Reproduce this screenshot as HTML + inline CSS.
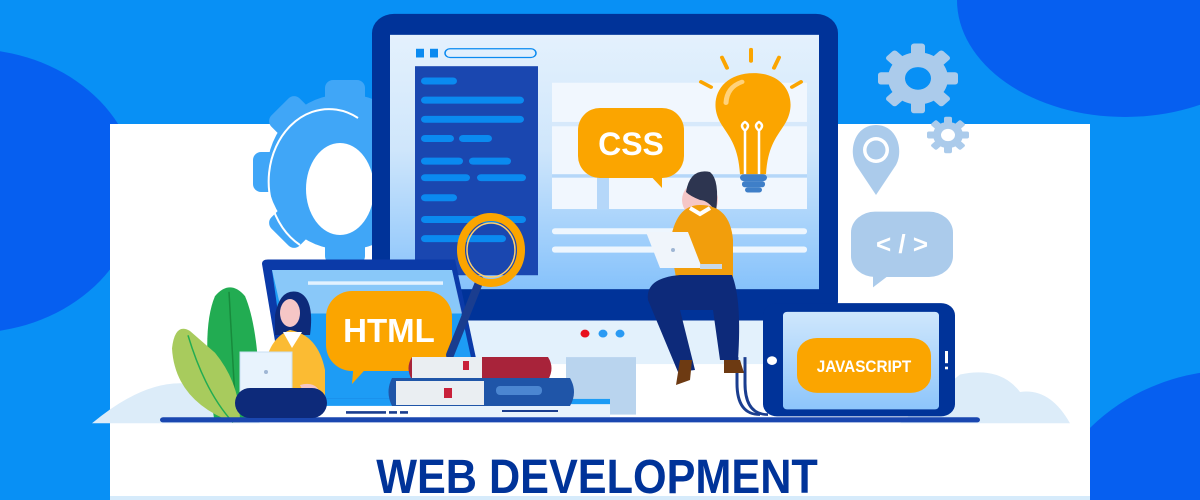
<!DOCTYPE html>
<html><head><meta charset="utf-8"><style>
html,body{margin:0;padding:0;width:1200px;height:500px;overflow:hidden;background:#0890f5}
svg{display:block}
</style></head><body>
<svg width="1200" height="500" viewBox="0 0 1200 500" xmlns="http://www.w3.org/2000/svg" font-family="Liberation Sans, sans-serif">
<defs>
<linearGradient id="sg" x1="0" y1="0" x2="0" y2="1"><stop offset="0" stop-color="#e4f1fd"/><stop offset="0.45" stop-color="#cfe6fb"/><stop offset="1" stop-color="#86c2fb"/></linearGradient>
<linearGradient id="tg" x1="0" y1="0" x2="0" y2="1"><stop offset="0" stop-color="#cfe7fc"/><stop offset="1" stop-color="#8dc5fb"/></linearGradient>
</defs>
<rect width="1200" height="500" fill="#0890f5"/>
<ellipse cx="-30" cy="191" rx="168" ry="142" fill="#065ff0"/>
<ellipse cx="1125" cy="0" rx="168" ry="117" fill="#065ff0"/>
<ellipse cx="1235" cy="545" rx="195" ry="175" fill="#065ff0"/>
<rect x="110" y="124" width="980" height="376" fill="#fff"/>
<rect x="110" y="496" width="980" height="4" fill="#d6ebfb"/>
<g fill="#40a6f7" transform="translate(345 172)">
<circle r="78"/>
<rect x="-20" y="-92" width="40" height="184" rx="8"/>
<rect x="-20" y="-92" width="40" height="184" rx="8" transform="rotate(45)"/>
<rect x="-20" y="-92" width="40" height="184" rx="8" transform="rotate(90)"/>
<rect x="-20" y="-92" width="40" height="184" rx="8" transform="rotate(135)"/>
</g>
<ellipse cx="340" cy="189" rx="34" ry="46" fill="#fff"/>
<path d="M358 118 A60 72 0 0 0 300 245" stroke="#fff" stroke-width="2" fill="none"/>
<g transform="scale(1 0.871)">
<path d="M92 486 Q140 440 180 440 Q230 440 260 486Z" fill="#dcecf9"/>
<path d="M960 430 Q1000 420 1020 450 Q1050 445 1070 486 L900 486Z" fill="#dcecf9"/>
<rect x="372" y="16" width="466" height="352" rx="22" fill="#003399"/>
<rect x="390" y="40" width="429" height="292" fill="url(#sg)"/>
<rect x="416" y="56" width="8" height="10" fill="#0a8af0"/><rect x="430" y="56" width="8" height="10" fill="#0a8af0"/>
<rect x="445" y="56" width="91" height="10" rx="5" fill="none" stroke="#0a8af0" stroke-width="1.5"/>
<rect x="552" y="95" width="255" height="145" fill="#f1f7fe"/>
<rect x="552" y="140" width="255" height="5" fill="#d7e9fb"/>
<rect x="552" y="200" width="255" height="4" fill="#b5d7f9"/>
<rect x="597" y="200" width="12" height="40" fill="#b5d7f9"/>
<rect x="552" y="262" width="255" height="7" rx="3" fill="#eef6fe"/>
<rect x="552" y="283" width="255" height="7" rx="3" fill="#eef6fe"/>
<rect x="415" y="76" width="123" height="240" fill="#1a47b0"/>
<g fill="#0a8af0">
<rect x="421" y="89" width="36" height="8" rx="4"/>
<rect x="421" y="111" width="103" height="8" rx="4"/>
<rect x="421" y="133" width="103" height="8" rx="4"/>
<rect x="421" y="155" width="33" height="8" rx="4"/><rect x="459" y="155" width="33" height="8" rx="4"/>
<rect x="421" y="181" width="42" height="8" rx="4"/><rect x="469" y="181" width="42" height="8" rx="4"/>
<rect x="421" y="200" width="49" height="8" rx="4"/><rect x="477" y="200" width="49" height="8" rx="4"/>
<rect x="421" y="223" width="36" height="8" rx="4"/>
<rect x="421" y="248" width="105" height="8" rx="4"/>
<rect x="421" y="270" width="85" height="8" rx="4"/>
</g>
<rect x="440" y="368" width="330" height="50" fill="#e3f1fc"/>
<rect x="566" y="410" width="70" height="66" fill="#b9d4ee"/>
<circle cx="585" cy="383" r="4.5" fill="#e8101e"/><circle cx="603" cy="383" r="4.5" fill="#2a9af3"/><circle cx="620" cy="383" r="4.5" fill="#2a9af3"/>
<g stroke="#fba500" stroke-width="4" stroke-linecap="round">
<line x1="751" y1="57" x2="751" y2="70"/><line x1="722" y1="66" x2="727" y2="78"/><line x1="779" y1="66" x2="774" y2="78"/>
<line x1="701" y1="94" x2="711" y2="100"/><line x1="801" y1="94" x2="792" y2="100"/></g>
<path d="M754 84 C720 84 708 115 720 140 C728 156 738 165 740 200 L766 200 C768 165 778 156 786 140 C798 115 786 84 754 84Z" fill="#fba500"/>
<path d="M726 118 Q727 100 742 94" stroke="#ffd27a" stroke-width="5" fill="none" stroke-linecap="round"/>
<path d="M745 200 V150 M759 200 V150 M745 150 q-6 -6 0 -10 q6 4 0 10 M759 150 q-6-6 0-10 q6 4 0 10" stroke="#fff" stroke-width="2.5" fill="none"/>
<rect x="740" y="200" width="27" height="8" rx="4" fill="#3f7fc8"/>
<rect x="742" y="208" width="23" height="7" rx="3" fill="#3f7fc8"/>
<rect x="745" y="215" width="17" height="6" rx="3" fill="#3f7fc8"/>
<path d="M737 410 V440 Q737 476 760 476" stroke="#1a3d8f" stroke-width="3" fill="none"/>
<path d="M745 410 V440 Q745 476 768 476" stroke="#1a3d8f" stroke-width="3" fill="none"/>
<rect x="763" y="348" width="192" height="130" rx="14" fill="#003399"/>
<rect x="783" y="358" width="156" height="112" rx="4" fill="url(#tg)"/>
<circle cx="772" cy="414" r="5" fill="#fff"/>
<rect x="797" y="388" width="134" height="63" rx="20" fill="#fba500"/>
<rect x="945" y="403" width="3" height="14" fill="#fff"/><rect x="945" y="421" width="3" height="3" fill="#fff"/>
<path d="M262 303 Q262 298 268 298 L455 298 L485 460 L285 460Z" fill="#0b3aa8"/>
<path d="M272 310 L452 310 L480 458 L290 458Z" fill="#1d9cf5"/>
<path d="M272 310 L452 310 L462 360 L282 360Z" fill="#b8dcfb" opacity="0.7"/>
<rect x="308" y="323" width="135" height="4" fill="#e3f2ff"/>
<rect x="290" y="458" width="320" height="8" fill="#1d9cf5"/>
<rect x="430" y="464" width="180" height="15" fill="#e8f3fc"/>
<rect x="346" y="472" width="40" height="3" fill="#1a3d8f"/><rect x="389" y="472" width="8" height="3" fill="#1a3d8f"/><rect x="400" y="472" width="8" height="3" fill="#1a3d8f"/>
<path d="M214 480 Q200 380 215 340 Q230 320 245 340 Q260 380 260 480Z" fill="#22ac52"/>
<path d="M229 335 L236 480" stroke="#188a3c" stroke-width="1.5"/>
<path d="M233 485 Q175 460 172 400 Q175 370 190 380 Q200 390 215 405 Q240 440 240 485Z" fill="#a8cb5d"/>
<path d="M188 385 Q205 450 233 485" stroke="#22ac52" stroke-width="1.5" fill="none"/>
<rect x="160" y="479" width="820" height="6" rx="3" fill="#1a47b0"/>
<g fill="#abcbeb">
<circle cx="918" cy="90" r="30"/>
<g transform="translate(918 90)">
<rect x="-7" y="-40" width="14" height="80" rx="3"/>
<rect x="-7" y="-40" width="14" height="80" rx="3" transform="rotate(45)"/>
<rect x="-7" y="-40" width="14" height="80" rx="3" transform="rotate(90)"/>
<rect x="-7" y="-40" width="14" height="80" rx="3" transform="rotate(135)"/>
</g>
<circle cx="948" cy="155" r="15"/>
<g transform="translate(948 155)">
<rect x="-4" y="-21" width="8" height="42" rx="2"/>
<rect x="-4" y="-21" width="8" height="42" rx="2" transform="rotate(45)"/>
<rect x="-4" y="-21" width="8" height="42" rx="2" transform="rotate(90)"/>
<rect x="-4" y="-21" width="8" height="42" rx="2" transform="rotate(135)"/>
</g>
<rect x="851" y="243" width="102" height="75" rx="24"/>
<path d="M873 310 L890 315 L873 330Z"/>
</g>
<circle cx="918" cy="90" r="13" fill="#0890f5"/>
<circle cx="948" cy="155" r="7" fill="#fff"/>
</g>
<!-- unscaled elements -->
<path d="M876 125 C855 125 848 150 856 165 L876 195 L896 165 C904 150 897 125 876 125Z" fill="#abcbeb"/>
<circle cx="876" cy="150" r="13" fill="#fff"/><circle cx="876" cy="150" r="9.5" fill="#abcbeb"/>
<!-- CSS bubble -->
<rect x="578" y="108" width="106" height="70" rx="22" fill="#fba500"/>
<path d="M645 170 L662 170 L662 188Z" fill="#fba500"/>
<!-- man -->
<circle cx="700" cy="200" r="18" fill="#f5c6c6"/>
<path d="M686 192 Q690 168 710 172 Q720 180 716 212 Q708 200 700 200 Q690 196 686 192Z" fill="#2d3550"/>
<path d="M670 244 Q675 205 700 205 Q730 205 733 240 L733 300 L680 300Z" fill="#f29e0c"/>
<path d="M690 208 L700 214 L710 208" stroke="#fff" stroke-width="4" fill="none"/>
<path d="M648 300 Q645 278 680 275 L732 275 Q742 300 738 360 L720 360 L713 310 L680 310 L695 370 L678 372Z" fill="#0d2a7a"/>
<path d="M680 360 L692 360 L690 380 L676 385Z" fill="#6d3a12"/>
<path d="M724 360 L740 360 L744 373 L724 373Z" fill="#6d3a12"/>
<path d="M646 232 L688 232 L702 268 L660 268Z" fill="#f0f5fb"/>
<circle cx="673" cy="250" r="2" fill="#9fb6d4"/>
<rect x="700" y="264" width="22" height="5" fill="#c8d8ea"/>
<!-- woman -->
<path d="M275 315 Q280 288 298 292 Q315 298 310 335 L275 335Z" fill="#0d2a7a"/>
<ellipse cx="290" cy="313" rx="10" ry="14" fill="#f5c6c6"/>
<path d="M262 395 Q262 340 290 330 Q318 335 325 370 L325 410 L262 410Z" fill="#fbbb33"/>
<path d="M283 332 L292 348 L302 332" fill="#fff"/>
<rect x="240" y="352" width="52" height="40" fill="#e8f3fd" stroke="#c9dff3"/>
<circle cx="266" cy="372" r="2" fill="#9fb6d4"/>
<path d="M300 385 Q318 380 322 398 L310 405Z" fill="#f5c6c6"/>
<rect x="235" y="388" width="92" height="30" rx="15" fill="#0d2a7a"/>
<!-- HTML bubble -->
<rect x="326" y="291" width="126" height="80" rx="26" fill="#fba500"/>
<path d="M354 360 L372 362 L352 384Z" fill="#fba500"/>
<!-- magnifier -->
<path d="M480 280 L450 355" stroke="#1a3d8f" stroke-width="8" stroke-linecap="round"/>
<ellipse cx="491" cy="250" rx="30" ry="33" fill="none" stroke="#fba500" stroke-width="8"/>
<ellipse cx="491" cy="250" rx="24" ry="27" fill="none" stroke="#ffcf6a" stroke-width="1.5"/>
<!-- books -->
<path d="M412 357 L548 357 Q555 368 548 380 L412 380 Q405 368 412 357Z" fill="#a8233a"/>
<rect x="412" y="357" width="70" height="23" fill="#eaeef2"/>
<rect x="463" y="361" width="6" height="9" fill="#c8203a"/>
<path d="M392 378 L570 378 Q578 392 570 406 L392 406 Q385 392 392 378Z" fill="#1f55a8"/>
<rect x="396" y="381" width="88" height="24" fill="#eaeef2"/>
<rect x="444" y="388" width="8" height="10" fill="#c8203a"/>
<rect x="496" y="386" width="46" height="9" rx="4" fill="#4b86d1"/>
<rect x="502" y="410" width="56" height="2" fill="#1a3d8f"/>
<!-- texts -->
<text x="631" y="155" font-size="32" font-weight="bold" fill="#fff" text-anchor="middle">CSS</text>
<text x="389" y="342" font-size="33" font-weight="bold" fill="#fff" text-anchor="middle">HTML</text>
<text x="864" y="372" font-size="17" font-weight="bold" fill="#fff" text-anchor="middle" transform="translate(864 0) scale(0.9 1) translate(-864 0)">JAVASCRIPT</text>
<text x="902" y="253" font-size="26" font-weight="bold" fill="#fff" text-anchor="middle">&lt; / &gt;</text>
<text x="597" y="493" font-size="48" font-weight="bold" fill="#003399" text-anchor="middle" transform="translate(597 0) scale(0.9 1) translate(-597 0)">WEB DEVELOPMENT</text>
</svg>
</body></html>
